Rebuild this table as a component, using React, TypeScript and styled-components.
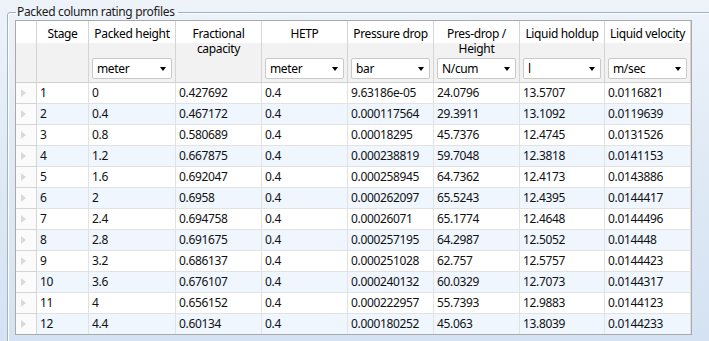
import React from "react";
import styled, { createGlobalStyle } from "styled-components";

const GlobalStyle = createGlobalStyle`
  html, body {
    margin: 0;
    padding: 0;
    overflow: hidden;
  }
  body {
    width: 709px;
    height: 341px;
    background: linear-gradient(to bottom, #eef3fa 0%, #e2ebf6 40%, #d4e2f3 100%);
    font-family: "Segoe UI", "Noto Sans", "Open Sans", sans-serif;
    font-size: 12px;
    letter-spacing: -0.35px;
    color: #000;
  }
`;

const Page = styled.div`
  width: 709px;
  height: 341px;
  overflow: hidden;
`;

const GroupBox = styled.fieldset`
  margin: 4px 0 0 7px;
  padding: 0 0 0 7px;
  width: 740px;
  height: 400px;
  box-sizing: border-box;
  border: 1px solid #9db1cb;
  border-radius: 3px;
  box-shadow: inset 1px 1px 0 #ffffff;
`;

const Legend = styled.legend`
  padding: 0 3px 0 1px;
  margin-left: 1px;
  font-size: 12px;
  line-height: 16px;
  color: #1b1b1b;
`;

const COLS = "21px 52px 87px 86px 86px 86px 86px 85px 86px";

const Grid = styled.div`
  display: grid;
  grid-template-columns: ${COLS};
  width: max-content;
  margin-top: 0;
  border: 1px solid #a9a9a9;
  background: #fff;
`;

const HeaderCell = styled.div`
  height: 62px;
  box-sizing: border-box;
  border-right: 1px solid #d5d5d5;
  border-bottom: 1px solid #d0d0d0;
  background: linear-gradient(to bottom, #ffffff 0, #ffffff 22px, #f2f2f2 22px, #f2f2f2 100%);
  display: flex;
  flex-direction: column;
  justify-content: space-between;
`;

const Caption = styled.div`
  padding-top: 5px;
  text-align: center;
  line-height: 15px;
  white-space: pre-line;
  color: #000;
`;

const UnitBox = styled.div`
  height: 21px;
  box-sizing: border-box;
  margin: 0 3px 3px 3px;
  border: 1px solid #c9c9c9;
  border-radius: 2px;
  background: #fff;
  display: flex;
  align-items: center;
  justify-content: space-between;
  padding: 0 5px 0 4px;
  line-height: 19px;
`;

const Arrow = styled.span`
  width: 0;
  height: 0;
  border-left: 3.5px solid transparent;
  border-right: 3.5px solid transparent;
  border-top: 4px solid #000;
`;

const RowHead = styled.div<{ $last: boolean }>`
  height: ${(p) => (p.$last ? 20 : 21)}px;
  box-sizing: border-box;
  border-right: 1px solid #d5d5d5;
  border-bottom: ${(p) => (p.$last ? "none" : "1px solid #d5d5d5")};
  background: #fbfbfb;
  display: flex;
  align-items: center;
  padding-left: 5px;
`;

const Marker = styled.span`
  width: 0;
  height: 0;
  border-left: 5px solid #d9d9d9;
  border-top: 4.5px solid transparent;
  border-bottom: 4.5px solid transparent;
`;

const Cell = styled.div<{ $alt: boolean; $last: boolean }>`
  height: ${(p) => (p.$last ? 20 : 21)}px;
  box-sizing: border-box;
  border-right: 1px solid #e2e2e2;
  border-bottom: ${(p) => (p.$last ? "none" : "1px solid #e2e2e2")};
  background: ${(p) => (p.$alt ? "#eff6fe" : "#ffffff")};
  padding-left: 3px;
  line-height: 20px;
  white-space: nowrap;
  overflow: hidden;
  color: #111;
`;

const columns: { title: string; unit?: string }[] = [
  { title: "Stage" },
  { title: "Packed height", unit: "meter" },
  { title: "Fractional\ncapacity" },
  { title: "HETP", unit: "meter" },
  { title: "Pressure drop", unit: "bar" },
  { title: "Pres-drop /\nHeight", unit: "N/cum" },
  { title: "Liquid holdup", unit: "l" },
  { title: "Liquid velocity", unit: "m/sec" },
];

const rows: string[][] = [
  ["1", "0", "0.427692", "0.4", "9.63186e-05", "24.0796", "13.5707", "0.0116821"],
  ["2", "0.4", "0.467172", "0.4", "0.000117564", "29.3911", "13.1092", "0.0119639"],
  ["3", "0.8", "0.580689", "0.4", "0.00018295", "45.7376", "12.4745", "0.0131526"],
  ["4", "1.2", "0.667875", "0.4", "0.000238819", "59.7048", "12.3818", "0.0141153"],
  ["5", "1.6", "0.692047", "0.4", "0.000258945", "64.7362", "12.4173", "0.0143886"],
  ["6", "2", "0.6958", "0.4", "0.000262097", "65.5243", "12.4395", "0.0144417"],
  ["7", "2.4", "0.694758", "0.4", "0.00026071", "65.1774", "12.4648", "0.0144496"],
  ["8", "2.8", "0.691675", "0.4", "0.000257195", "64.2987", "12.5052", "0.014448"],
  ["9", "3.2", "0.686137", "0.4", "0.000251028", "62.757", "12.5757", "0.0144423"],
  ["10", "3.6", "0.676107", "0.4", "0.000240132", "60.0329", "12.7073", "0.0144317"],
  ["11", "4", "0.656152", "0.4", "0.000222957", "55.7393", "12.9883", "0.0144123"],
  ["12", "4.4", "0.60134", "0.4", "0.000180252", "45.063", "13.8039", "0.0144233"],
];

export default function App() {
  return (
    <Page>
      <GlobalStyle />
      <GroupBox>
        <Legend>Packed column rating profiles</Legend>
        <Grid>
          <HeaderCell />
          {columns.map((c) => (
            <HeaderCell key={c.title}>
              <Caption>{c.title}</Caption>
              {c.unit && (
                <UnitBox>
                  <span>{c.unit}</span>
                  <Arrow />
                </UnitBox>
              )}
            </HeaderCell>
          ))}
          {rows.map((r, i) => {
            const last = i === rows.length - 1;
            return (
              <React.Fragment key={r[0]}>
                <RowHead $last={last}>
                  <Marker />
                </RowHead>
                {r.map((v, j) => (
                  <Cell key={j} $alt={i % 2 === 1} $last={last}>
                    {v}
                  </Cell>
                ))}
              </React.Fragment>
            );
          })}
        </Grid>
      </GroupBox>
    </Page>
  );
}
